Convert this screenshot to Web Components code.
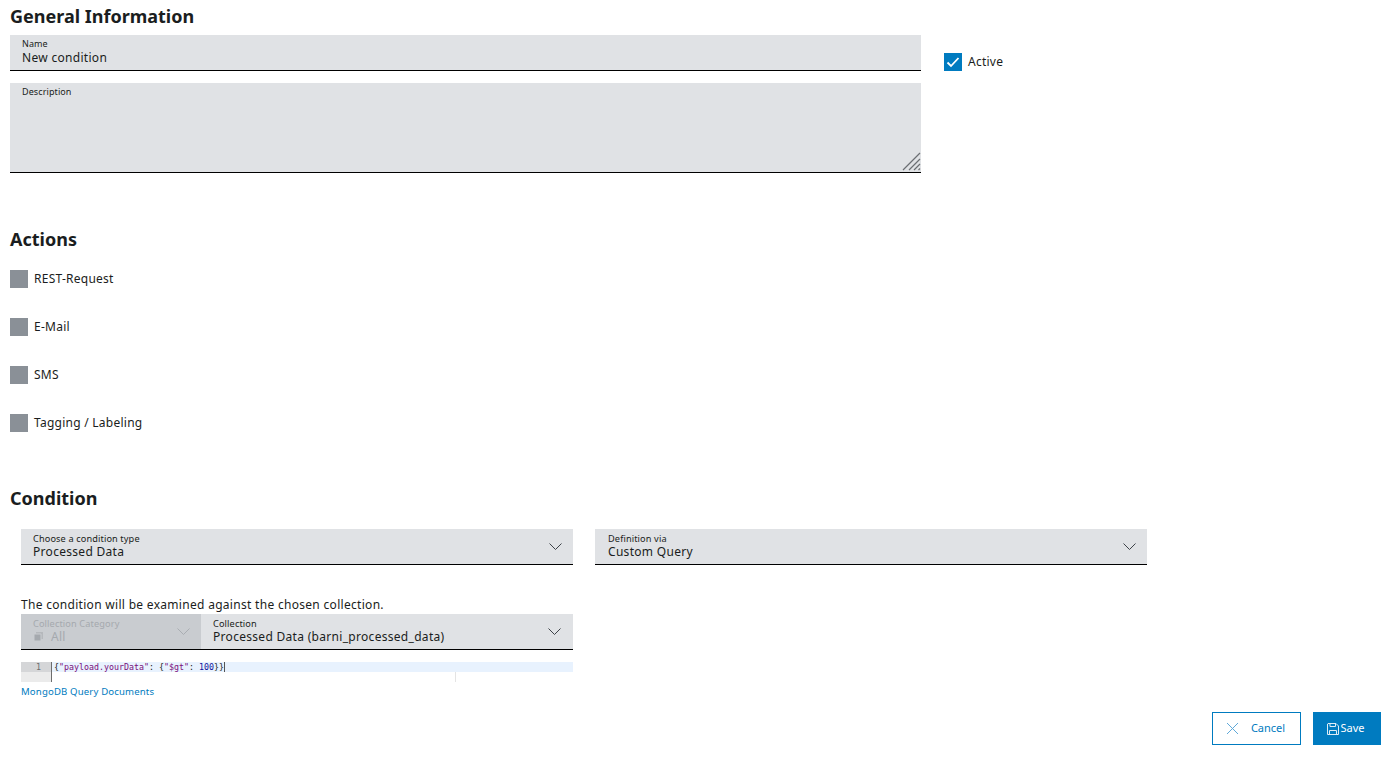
<!DOCTYPE html>
<html lang="en">
<head>
<title>New condition</title>
<style>
    html, body { margin: 0; height: 100%; }
    body {
        height: 763px;
        overflow: hidden;
        background: #fff;
        color: #1a1d20;
        font-family: "Noto Sans", "Liberation Sans", sans-serif;
        font-size: 12px;
    }
    main { display: block; padding: 0 13px 0 10px; height: 763px; box-sizing: border-box; }
    .general { display: grid; grid-template-columns: 911px auto; column-gap: 23px; }
    .general-fields { display: flex; flex-direction: column; gap: 12px; }
    .general-side { padding-top: 18px; }
    .actions { display: flex; flex-direction: column; gap: 30px; }
    .condition { padding-left: 11px; }
    .selects { display: grid; grid-template-columns: 552px 552px; column-gap: 22px; }
    .note { font-size: 12px; line-height: 16px; margin: 32px 0 0; letter-spacing: .3px; }
    .collection { display: grid; grid-template-columns: 180px 372px; width: 552px; margin-top: 1px; }
    x-editor { width: 552px; }
    a { display: block; color: #007bc0; font-size: 9.6px; line-height: 14px; margin-top: 3px; text-decoration: none; letter-spacing: .15px; }
    .footer { display: flex; justify-content: flex-end; gap: 12px; margin-top: 13px; }
</style>
</head>
<body>
<main>
    <x-heading style="--top:6px;--bottom:8px">General Information</x-heading>
    <div class="general">
        <div class="general-fields">
            <x-field label="Name">New condition</x-field>
            <x-field label="Description" area></x-field>
        </div>
        <div class="general-side"><x-check checked>Active</x-check></div>
    </div>

    <x-heading style="--top:56px;--bottom:20px">Actions</x-heading>
    <div class="actions">
        <x-check>REST-Request</x-check>
        <x-check>E-Mail</x-check>
        <x-check>SMS</x-check>
        <x-check>Tagging / Labeling</x-check>
    </div>

    <x-heading style="--top:56px;--bottom:20px">Condition</x-heading>
    <div class="condition">
        <div class="selects">
            <x-select label="Choose a condition type">Processed Data</x-select>
            <x-select label="Definition via" style="--pad:13px">Custom Query</x-select>
        </div>
        <p class="note">The condition will be examined against the chosen collection.</p>
        <div class="collection">
            <x-select label="Collection Category" disabled>All</x-select>
            <x-select label="Collection" style="--chev:12px">Processed Data (barni_processed_data)</x-select>
        </div>
        <x-editor></x-editor>
        <a href="#">MongoDB Query Documents</a>
    </div>
    <div class="footer">
        <x-button kind="secondary" icon="close">Cancel</x-button>
        <x-button kind="primary" icon="save">Save</x-button>
    </div>
</main>

<script>
    class Heading extends HTMLElement {
        constructor() {
            super();
            this.attachShadow({mode:'open'}).innerHTML = `
            <style>
                :host { display: block; margin: var(--top, 0) 0 var(--bottom, 0); font-size: 18px; line-height: 21px; font-weight: 700; color: #1a1d20; }
            </style>
            <slot></slot>`;
        }
    }
    customElements.define('x-heading', Heading);

    class Field extends HTMLElement {
        constructor() {
            super();
            const area = this.hasAttribute('area');
            this.attachShadow({mode:'open'}).innerHTML = `
            <style>
                :host { display: block; box-sizing: border-box; height: ${area ? 90 : 36}px; padding: 3px 12px 0; background: #e0e2e5; border-bottom: 1px solid #000; position: relative; }
                .label { font-size: 9px; line-height: 11px; letter-spacing: .1px; color: #1a1d20; }
                .value { font-size: 12px; line-height: 15px; letter-spacing: .3px; margin-top: 1px; }
                svg { position: absolute; right: 0; bottom: 1px; }
            </style>
            <div class="label">${this.getAttribute('label')}</div>
            <div class="value"><slot></slot></div>
            ${area ? `<svg width="19" height="19" viewBox="0 0 19 19" fill="none" stroke="#6b6f73" stroke-width="1.2"><path d="M1 18 18 1M7 18 18 7M12 18 18 12M16.500 18 18 16.500"/></svg>` : ''}`;
        }
    }
    customElements.define('x-field', Field);

    class Check extends HTMLElement {
        constructor() {
            super();
            const on = this.hasAttribute('checked');
            this.attachShadow({mode:'open'}).innerHTML = `
            <style>
                :host { display: flex; align-items: center; gap: 6px; height: 18px; font-size: 12px; letter-spacing: .25px; }
                .box { width: 18px; height: 18px; background: ${on ? '#007bc0' : '#8a9097'}; flex: none; }
                svg { display: block; }
                span { position: relative; top: -1px; }
            </style>
            <div class="box">${on ? `<svg width="18" height="18" viewBox="0 0 18 18" fill="none" stroke="#fff" stroke-width="1.800"><path d="M3.500 9.500 7 13l7.500-8"/></svg>` : ''}</div>
            <span><slot></slot></span>`;
        }
    }
    customElements.define('x-check', Check);

    class Select extends HTMLElement {
        constructor() {
            super();
            const off = this.hasAttribute('disabled');
            this.attachShadow({mode:'open'}).innerHTML = `
            <style>
                :host { display: block; box-sizing: border-box; height: 36px; padding: 5px 12px 0 var(--pad, 12px); background: ${off ? '#c9ccd0' : '#e0e2e5'}; border-bottom: 1px solid #000; position: relative; color: ${off ? '#a5a9ae' : '#1a1d20'}; }
                .label { font-size: 9.2px; line-height: 10px; letter-spacing: .12px; }
                .value { font-size: 12px; line-height: 15px; letter-spacing: .3px; display: flex; align-items: center; gap: 7px; }
                .chev { position: absolute; right: var(--chev, 11px); top: 14px; }
                .stack { flex: none; }
            </style>
            <div class="label">${this.getAttribute('label')}</div>
            <div class="value">${off ? `<svg class="stack" width="11" height="11" viewBox="0 0 11 11"><path d="M3 1h7v7H3z" fill="#b5b8bc"/><path d="M1 3h7v7H1z" fill="#a5a9ae" stroke="#c9ccd0"/></svg>` : ''}<span><slot></slot></span></div>
            <svg class="chev" width="13" height="8" viewBox="0 0 13 8" fill="none" stroke="${off ? '#a9adb2' : '#3d4248'}" stroke-width="1"><path d="M.5.500l6 6 6-6"/></svg>`;
        }
    }
    customElements.define('x-select', Select);

    class Editor extends HTMLElement {
        constructor() {
            super();
            this.attachShadow({mode:'open'}).innerHTML = `
            <style>
                :host { display: grid; grid-template-columns: 31px 1fr; height: 20px; margin-top: 12px; font: 8.300px/10px "DejaVu Sans Mono", "Liberation Mono", monospace; }
                .gutter { background: linear-gradient(#d5d6d8 10px, #ebebeb 10px); border-right: 1px solid #6d6d6d; text-align: right; padding-right: 10px; color: #6d6d6d; box-sizing: border-box; }
                .code { position: relative; }
                .line { height: 10px; background: #e8f2fe; padding-left: 2px; white-space: pre; color: #1a1d20; }
                .line i { font-style: normal; border-right: 1px solid #555; }
                .key { color: #7a0e7a; }
                .num { color: #11119a; }
                .ruler { position: absolute; left: 403px; top: 10px; width: 1px; height: 10px; background: #e4e4e4; }
            </style>
            <div class="gutter">1</div>
            <div class="code">
                <div class="line"><i>{<span class="key">"payload.yourData"</span>: {<span class="key">"$gt"</span>: <span class="num">100</span>}}</i></div>
                <div class="ruler"></div>
            </div>`;
        }
    }
    customElements.define('x-editor', Editor);

    class Button extends HTMLElement {
        constructor() {
            super();
            const primary = this.getAttribute('kind') === 'primary';
            const close = `<svg width="13" height="13" viewBox="0 0 13 13" fill="none" stroke="#5fa9d9" stroke-width="1"><path d="M1 1l11 11M12 1 1 12"/></svg>`;
            const save = `<svg width="12" height="12" viewBox="0 0 12 12" fill="none" stroke="#dcecf6" stroke-width="1"><path d="M1 .500h8l2.500 2.500v8.500H.500V1zM3 .500v3h5.500v-3M2.500 11.500V7.500h7v4"/></svg>`;
            this.attachShadow({mode:'open'}).innerHTML = `
            <style>
                :host { display: flex; align-items: center; justify-content: center; box-sizing: border-box; height: 33px; font-size: 11px; ${primary ? 'width: 68px; background: #007bc0; color: #fff; gap: 1px; border: 1px solid #007bc0; padding-right: 2px;' : 'width: 89px; background: #fff; color: #007bc0; gap: 12px; border: 1px solid #007bc0; padding-right: 2px;'} }
                svg { display: block; flex: none; }
                span { position: relative; top: -1px; }
            </style>
            ${this.getAttribute('icon') === 'close' ? close : save}<span><slot></slot></span>`;
        }
    }
    customElements.define('x-button', Button);
</script>
</body>
</html>
